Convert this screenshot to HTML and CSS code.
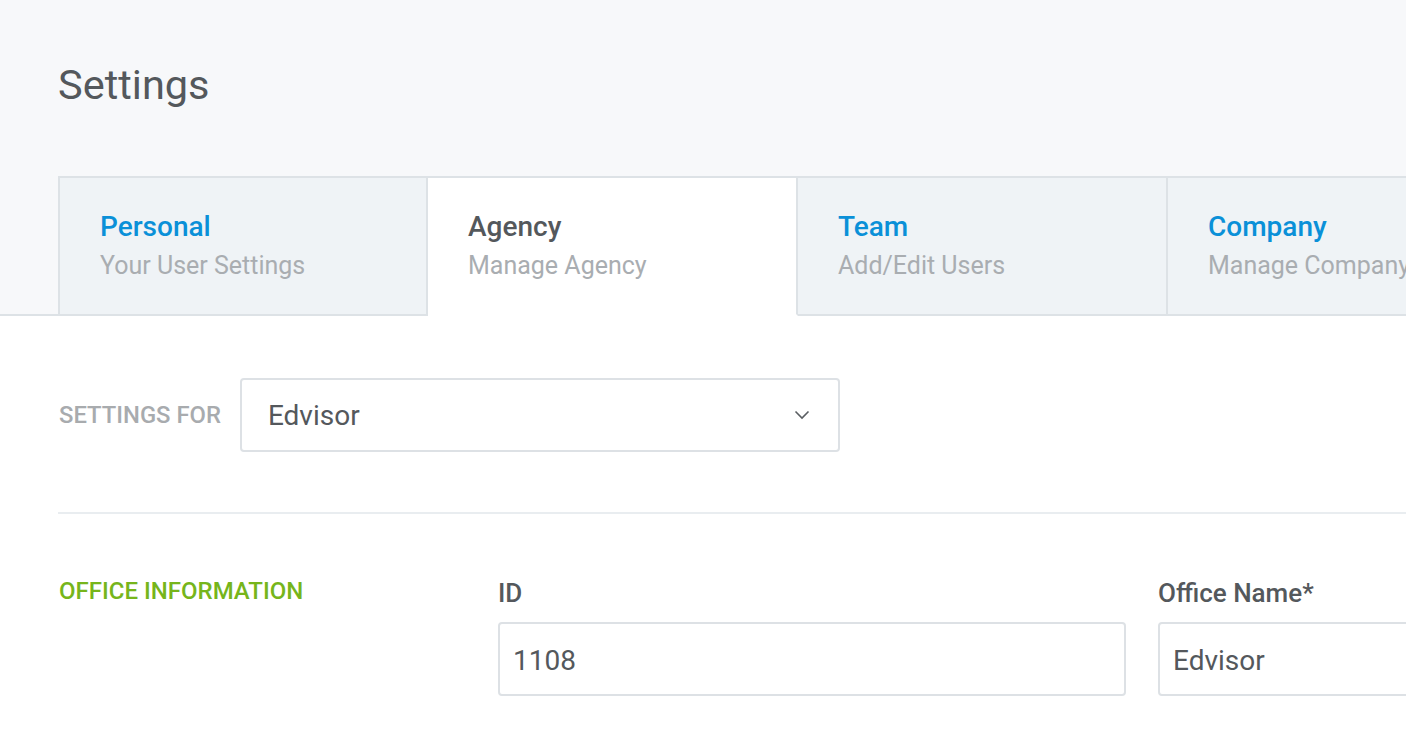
FILE: index.html
```html
<!DOCTYPE html>
<html lang="en">
<head>
<meta charset="utf-8">
<title>Settings</title>
<link rel="stylesheet" href="styles.css">
</head>
<body>
<div class="page">
  <header class="header">
    <h1 class="title">Settings</h1>
    <nav class="tabs">
      <a class="tab">
        <span class="tab-title">Personal</span>
        <span class="tab-sub">Your User Settings</span>
      </a>
      <a class="tab active">
        <span class="tab-title">Agency</span>
        <span class="tab-sub">Manage Agency</span>
      </a>
      <a class="tab">
        <span class="tab-title">Team</span>
        <span class="tab-sub">Add/Edit Users</span>
      </a>
      <a class="tab">
        <span class="tab-title">Company</span>
        <span class="tab-sub">Manage Company</span>
      </a>
    </nav>
  </header>
  <main class="content">
    <div class="settings-for">
      <span class="settings-label">SETTINGS FOR</span>
      <div class="select">
        <span class="select-value">Edvisor</span>
        <svg class="chevron" width="16" height="10" viewBox="0 0 16 10"><path d="M1.5 1.5 L8 8 L14.5 1.5" fill="none" stroke="#5a5e62" stroke-width="1.6"/></svg>
      </div>
    </div>
    <hr class="divider">
    <section class="office">
      <h2 class="section-title">OFFICE INFORMATION</h2>
      <div class="field">
        <label class="field-label">ID</label>
        <div class="input">1108</div>
      </div>
      <div class="field">
        <label class="field-label">Office Name*</label>
        <div class="input">Edvisor</div>
      </div>
    </section>
  </main>
</div>
</body>
</html>
```

FILE: styles.css
```css
html, body {
  margin: 0;
  padding: 0;
  overflow: hidden;
  background: #ffffff;
}
body {
  font-family: Roboto, "Liberation Sans", Arial, sans-serif;
  color: #54585c;
}
.page {
  width: 1406px;
  height: 734px;
  overflow: hidden;
}
.header {
  background: #f7f8fa;
  border-bottom: 2px solid #dde2e6;
  padding: 0 0 0 58px;
  height: 314px;
  box-sizing: content-box;
  display: flex;
  flex-direction: column;
}
.title {
  margin: 62px 0 0 0;
  font-size: 41.5px;
  font-weight: 400;
  line-height: 46px;
  color: #54585c;
}
.tabs {
  display: flex;
  margin-top: auto;
  margin-bottom: -2px;
}
.tab {
  flex: 0 0 370px;
  box-sizing: border-box;
  height: 140px;
  border-top: 2px solid #dde2e6;
  border-right: 2px solid #dde2e6;
  border-bottom: 2px solid #dde2e6;
  background: #eff3f6;
  padding: 32px 0 0 40px;
  display: flex;
  flex-direction: column;
  white-space: nowrap;
}
.tab:first-child {
  border-left: 2px solid #dde2e6;
}
.tab.active {
  background: #ffffff;
  border-bottom-color: #ffffff;
}
.tab-title {
  font-size: 28px;
  font-weight: 500;
  line-height: 34px;
  color: #0a90d8;
}
.tab.active .tab-title {
  color: #54585c;
}
.tab-sub {
  font-size: 25px;
  font-weight: 400;
  line-height: 36px;
  color: #a9adb1;
  margin-top: 4px;
}
.content {
  padding: 62px 0 0 58px;
}
.settings-for {
  display: flex;
  align-items: center;
  gap: 19px;
}
.settings-label {
  font-size: 23.8px;
  font-weight: 500;
  color: #a8abae;
  padding-left: 1px;
}
.select {
  box-sizing: border-box;
  width: 600px;
  height: 74px;
  border: 2px solid #dde1e5;
  border-radius: 4px;
  display: flex;
  align-items: center;
  justify-content: space-between;
  padding: 0 28px 0 26px;
}
.select-value {
  font-size: 28px;
  color: #54585c;
}
.divider {
  margin: 60px 0 0 0;
  border: 0;
  height: 2px;
  background: #e9edf0;
  width: 1400px;
}
.office {
  display: grid;
  grid-template-columns: 408px 628px 628px;
  column-gap: 32px;
  padding-top: 62px;
}
.section-title {
  margin: 0;
  font-size: 24px;
  font-weight: 500;
  color: #76b51b;
  padding-left: 1px;
  line-height: 30px;
}
.field {
  display: flex;
  flex-direction: column;
}
.field-label {
  font-size: 26px;
  font-weight: 500;
  color: #54585c;
  line-height: 34px;
  margin-bottom: 12px;
}
.input {
  box-sizing: border-box;
  height: 74px;
  border: 2px solid #dde1e5;
  border-radius: 4px;
  padding: 2px 13px 0;
  display: flex;
  align-items: center;
  font-size: 28px;
  color: #54585c;
}
```
